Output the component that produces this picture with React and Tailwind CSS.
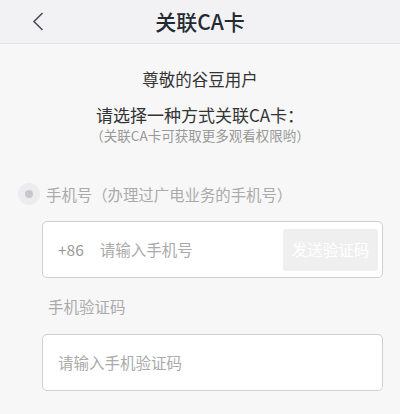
import React from "react";

const font = { fontFamily: '"Noto Sans CJK SC", "Noto Sans", sans-serif' };

const App = () => {
  return (
    <div
      className="w-[400px] h-[414px] bg-[#f7f7f7] flex flex-col overflow-hidden"
      style={font}
    >
      {/* header */}
      <div className="h-[44px] shrink-0 bg-[#f2f2f4] border-b border-[#e2e2e4] flex items-center relative">
        <svg
          className="absolute left-[32px] top-[12px]"
          width="12"
          height="19"
          viewBox="0 0 12 19"
          fill="none"
        >
          <path d="M10.5 1 L2 9.5 L10.5 18" stroke="#4a5058" strokeWidth="1.6" />
        </svg>
        <div className="flex-1 text-center text-[21px] font-medium text-[#222a33] leading-none">
          关联CA卡
        </div>
      </div>

      {/* intro */}
      <div className="flex flex-col items-center pt-[24px]">
        <div className="text-[16.5px] leading-[22px] text-[#333]">尊敬的谷豆用户</div>
        <div className="mt-[14px] text-[17px] leading-[22px] text-[#333]">
          请选择一种方式关联CA卡：
        </div>
        <div className="mt-[1px] text-[13.5px] leading-[16px] text-[#999]">
          （关联CA卡可获取更多观看权限哟）
        </div>
      </div>

      {/* phone option */}
      <div className="flex items-center mt-[40px] pl-[18px]">
        <div className="w-[22px] h-[22px] rounded-full bg-[#ececee] flex items-center justify-center">
          <div className="w-[8px] h-[8px] rounded-full bg-[#c8c8cc]" />
        </div>
        <div className="ml-[6px] text-[15.4px] leading-[22px] text-[#aaa]">
          手机号（办理过广电业务的手机号）
        </div>
      </div>

      <div className="ml-[42px] mr-[17px] mt-[16px] h-[57px] shrink-0 bg-white border border-[#cfcfcf] rounded-[5px] flex items-center pl-[15px] pr-[4px]">
        <span className="text-[15.5px] text-[#999]">+86</span>
        <span className="ml-[16px] flex-1 text-[15.5px] text-[#aaa]">请输入手机号</span>
        <div className="w-[95px] h-[42px] bg-[#efefef] rounded-[3px] flex items-center justify-center text-[15.5px] text-white">
          发送验证码
        </div>
      </div>

      <div className="ml-[48px] mt-[17px] text-[15.5px] leading-[22px] text-[#aaa]">手机验证码</div>

      <div className="ml-[42px] mr-[17px] mt-[17px] h-[57px] shrink-0 bg-white border border-[#cfcfcf] rounded-[5px] flex items-center pl-[15px]">
        <span className="text-[15.5px] text-[#aaa]">请输入手机验证码</span>
      </div>
    </div>
  );
};

export default App;
